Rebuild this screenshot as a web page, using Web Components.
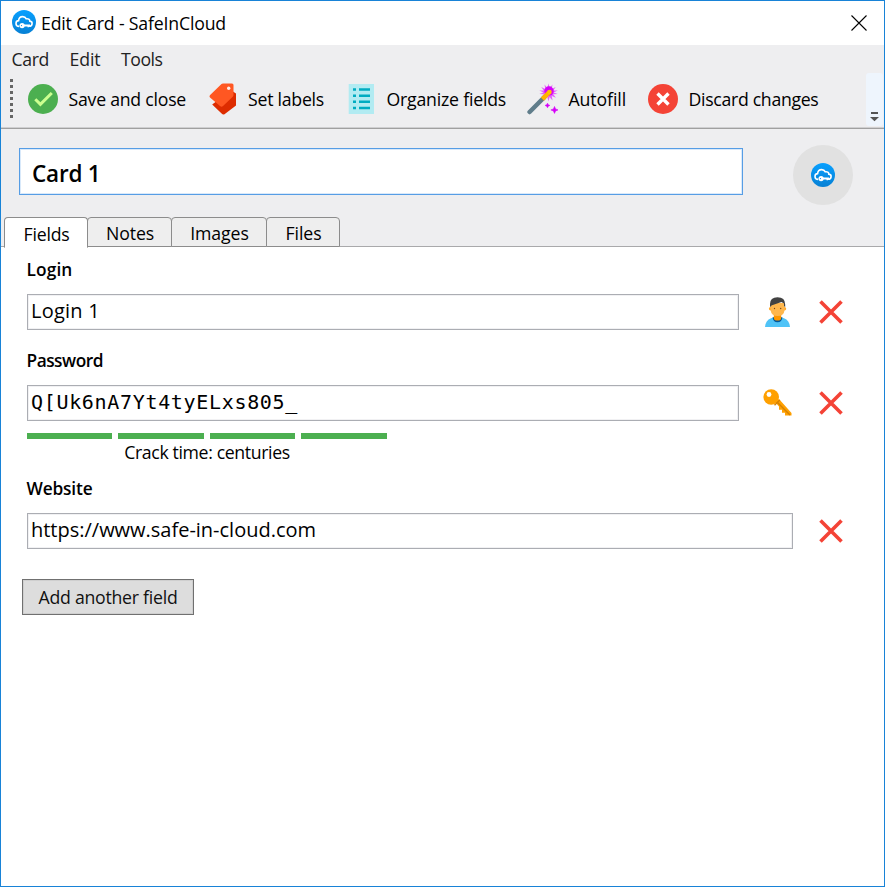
<!DOCTYPE html>
<html lang="en">
<head>
<meta charset="utf-8">
<title>Edit Card - SafeInCloud</title>
<style>
html, body { margin: 0; height: 100%; }
body { font: 17.700px/24px "Open Sans", "Noto Sans", sans-serif; color: #000; background: #fff; overflow: hidden; }
</style>
</head>
<body>
<card-window></card-window>
<script>
const define = (name, html, setup) => {
  const tpl = document.createElement('template');
  tpl.innerHTML = html;
  customElements.define(name, class extends HTMLElement {
    constructor() {
      super();
      this.attachShadow({ mode: 'open' }).append(tpl.content.cloneNode(true));
    }
    connectedCallback() { if (setup) setup(this, this.shadowRoot); }
  });
};

// One line of text, spaced to fill the width given in "w".
define('ui-text', `<style>:host{display:block;white-space:pre;flex:none}span{display:inline-block}</style><span><slot></slot></span>`, (el, root) => {
  const w = +el.getAttribute('w');
  if (!w) return;
  el.style.width = w + 'px';
  const natural = root.querySelector('span').getBoundingClientRect().width;
  el.style.letterSpacing = (w - natural) / el.textContent.length + 'px';
});

const ICONS = {
  app: [24, 24, `<defs><linearGradient id="g" x2="0" y2="1"><stop stop-color="#08a0ff"/><stop offset="1" stop-color="#0780d4"/></linearGradient></defs><circle cx="12" cy="12" r="12" fill="url(#g)"/><path d="M7.2 16.400C5.200 16.400 4 15.100 4 13.400c0-1.600 1.200-2.700 2.600-2.800C6.800 8.100 8.700 6.600 10.700 6.600c1.700 0 2.900.8 3.600 2.200 1.900-.4 3.500.7 3.500 2.300 1.400.2 2.400 1.200 2.300 2.500-.1 1.600-1.400 2.600-3 2.600" fill="none" stroke="#fff" stroke-width="1.600"/><circle cx="10.100" cy="15.600" r="2.600" fill="#fff"/><path d="M11.500 14.400h6.500v2.200h-1v.7h-1.500v-.7h-4z" fill="#fff"/><circle cx="9.500" cy="15.600" r=".6" fill="#0788df"/>`],
  check: [30, 30, `<circle cx="15" cy="15" r="15" fill="#4caf50"/><path d="M7.300 15.300l5.100 5.100L23.800 9" fill="none" stroke="#ccff90" stroke-width="3"/>`],
  tag: [28, 32, `<path d="M22 7.200L27 10.500V22.500L15.500 31.200Q14 32 12.600 30.600L3.200 21.500z" fill="#dd2c00"/><path d="M12.500 1Q13 .5 14 .5H23Q24.500 .5 24.500 2V12Q24.500 13 23.500 14L14 23Q12.500 24.300 11 22.900L1 14.600Q0 13.500 .9 12.300z" fill="#ff5722"/><circle cx="19.700" cy="5.200" r="1.700" fill="#ffebe6"/>`],
  list: [26, 30, `<path d="M.7 0H26v30H.7z" fill="#b2ebf2"/><path d="M5 4.300h3v2.500H5zm6 0h11v2.500H11zM5 10.400h3v2.500H5zm6 0h11v2.500H11zM5 16.500h3V19H5zm6 0h11V19H11zM5 22.700h3v2.500H5zm6 0h11v2.500H11z" fill="#00acc1"/>`],
  wand: [32, 32, `<path d="M21.500 .5l1.200 4.400 2.800-3.500-.8 4.500 4-2-2.500 3.700 4.500-.1-4.100 1.900 4.100 1.700-4.500.2 2.700 3.500-4.100-1.800.7 4.400-2.900-3.400-1.100 4.400-1.200-4.400-2.900 3.400.8-4.400-4.100 1.800 2.700-3.500-4.500-.2 4.100-1.700-4.100-1.900 4.500.1-2.600-3.700 4.100 2-.8-4.500 2.800 3.500z" fill="#e040fb" fill-opacity=".8"/><circle cx="22" cy="8" r="4.700" fill="#d500f9"/><path d="M2.600 29L16.500 15" stroke="#607d8b" stroke-width="4.500" stroke-linecap="round"/><path d="M15.400 16.200L22.500 9" stroke="#ffb300" stroke-width="4.500"/><circle cx="22.500" cy="9" r="2.250" fill="#ffc107"/><path d="M20.500 20.200l.7 1.500 1.600.7-1.600.8-.7 1.500-.8-1.500-1.600-.8 1.600-.7zM27.500 23.500l1 2.400 2.500 1-2.500 1.100-1 2.400-1-2.400-2.600-1.100 2.600-1z" fill="#d500f9" stroke="#d500f9" stroke-width=".6"/>`],
  discard: [30, 30, `<circle cx="15" cy="15" r="15" fill="#f44336"/><path d="M9.500 9.500l11 11m0-11l-11 11" stroke="#fff" stroke-width="3.400"/>`],
  close: [16, 16, `<path d="M.5.5l15 15m0-15l-15 15" stroke="#000" stroke-width="1.100"/>`],
  remove: [24, 24, `<path d="M1.500 1.500l21 21m0-21l-21 21" stroke="#f44336" stroke-width="3.600"/>`],
  more: [10, 10, `<path d="M1 0h7v2H1zM0 5h9l-4.500 4.200z" fill="#555"/>`],
  person: [26, 30, `<path d="M0 30Q.5 23.500 6 21.300Q9 20 12.500 20T19 21.300Q24.500 23.500 25 30z" fill="#4fc3f7"/><path d="M7.600 20.300Q8 25.300 12.500 25.300T17.400 20.300z" fill="#01579b"/><path d="M8.800 16h7.400v5Q16 23.600 12.500 23.600T8.800 21z" fill="#ff9800"/><circle cx="5.600" cy="11.800" r="1.700" fill="#ffa726"/><circle cx="19.500" cy="11.800" r="1.700" fill="#ffa726"/><path d="M5.600 6h14v7Q19 19 12.600 19T5.600 13z" fill="#ffb74d"/><path d="M5 10V7Q5 .3 12.500 .2Q20.200 .3 20.200 7.500V10L19 9V6.500L16.500 5L6.300 8.500V9z" fill="#424242"/><circle cx="9.500" cy="11.500" r=".65" fill="#784719"/><circle cx="15.700" cy="11.500" r=".65" fill="#784719"/>`],
  key: [30, 28, `<path d="M12 13L16 10L28.500 24V26.500H22V23.800H19V20.800H16V17.500z" fill="#ffa000"/><path d="M14 13L27 26" stroke="#d68100" stroke-width="1.400"/><circle cx="8.200" cy="8" r="7.800" fill="#ffa000"/><path d="M11.500 16.300L16.800 11" stroke="#d68100" stroke-width="1.400"/><circle cx="6" cy="5.500" r="2.400" fill="#fff"/>`]
};
define('ui-icon', `<style>:host{display:block;flex:none}svg{display:block}</style><div></div>`, (el, root) => {
  const [w, h, body] = ICONS[el.getAttribute('name')];
  root.querySelector('div').innerHTML = `<svg width="${w}" height="${h}" viewBox="0 0 ${w} ${h}">${body}</svg>`;
});

define('title-bar', `<style>:host{display:flex;height:44px;box-sizing:border-box;padding:0 17px 0 11px;background:#fff;align-items:center}
ui-icon{margin-top:-2px}ui-text{margin-left:5px}.x{margin:-1px 0 0 auto}</style>
<ui-icon name="app"></ui-icon><ui-text w="185">Edit Card - SafeInCloud</ui-text><ui-icon class="x" name="close"></ui-icon>`);

define('menu-bar', `<style>:host{display:flex;height:28px;align-items:center;padding-left:10.500px;gap:20.500px;color:#222;background:#eeeef0}</style>
<ui-text w="37.500">Card</ui-text><ui-text w="31">Edit</ui-text><ui-text w="41.500">Tools</ui-text>`);

define('tool-button', `<style>:host{display:flex;align-items:center;flex:none}</style><slot></slot>`);
define('tool-bar', `<style>:host{display:flex;height:55px;background:#eeeef0;align-items:center;border-bottom:1px solid #a0a0a0;box-shadow:inset 0 -1px #cfcfd1}
.grip{width:3px;height:39px;margin:-4px 15px 0 9px;background:repeating-linear-gradient(#666 0 3px,transparent 3px 6px)}
tool-button{margin-top:-3px}
.end{margin-left:auto;width:17px;height:53px;margin-bottom:2px;background:#eef5fd;border-radius:3px;display:flex;align-items:flex-end;justify-content:center;box-sizing:border-box;margin-right:1px}.end ui-icon{margin-bottom:4px}</style>
<div class="grip"></div>
<tool-button><ui-icon name="check"></ui-icon><ui-text w="117.500" style="margin-left:10.500px">Save and close</ui-text></tool-button>
<tool-button style="margin-left:23px"><ui-icon name="tag"></ui-icon><ui-text w="76" style="margin-left:11px">Set labels</ui-text></tool-button>
<tool-button style="margin-left:24px"><ui-icon name="list"></ui-icon><ui-text w="119.500" style="margin-left:12.500px">Organize fields</ui-text></tool-button>
<tool-button style="margin-left:21px"><ui-icon name="wand"></ui-icon><ui-text w="57.500" style="margin-left:9.500px">Autofill</ui-text></tool-button>
<tool-button style="margin-left:22px"><ui-icon name="discard"></ui-icon><ui-text w="130" style="margin-left:10.500px">Discard changes</ui-text></tool-button>
<div class="end"><ui-icon name="more"></ui-icon></div>`);

define('card-header', `<style>:host{display:flex;height:88px;background:#eeeef0;align-items:flex-start;padding:0 31px 0 18px;justify-content:space-between}
.box{margin-top:19px;width:724px;height:47px;box-sizing:border-box;border:1px solid #569de5;box-shadow:inset 0 0 0 1px #d9e9fa;background:#fff;display:flex;align-items:center;padding:5px 0 0 12px;font-size:22.500px;font-weight:600;line-height:32px}
.avatar{width:60px;height:60px;margin-top:16px;border-radius:50%;background:#e1e1e1;display:grid;place-items:center}</style>
<div class="box"><ui-text w="68.500">Card 1</ui-text></div><div class="avatar"><ui-icon name="app"></ui-icon></div>`);

define('tab-item', `<style>:host{display:flex;box-sizing:border-box;height:30px;align-items:center;justify-content:center;border:1px solid #8c8c8c;border-radius:4px 4px 0 0;background:#eee;padding:1px 0 0 1px;margin-left:-1px}
:host([active]){background:#fff;height:31px;margin:0;border-bottom-color:#fff;padding-top:3px;position:relative}</style><slot></slot>`);
define('tab-strip', `<style>:host{display:flex;height:30px;padding-left:3px;background:linear-gradient(#a9a9ab,#a9a9ab) bottom/100% 1px no-repeat,#eeeef0}</style>
<tab-item active style="width:84px"><ui-text w="46">Fields</ui-text></tab-item><tab-item style="width:85px"><ui-text w="48">Notes</ui-text></tab-item><tab-item style="width:96px"><ui-text w="58.500">Images</ui-text></tab-item><tab-item style="width:74px"><ui-text w="36">Files</ui-text></tab-item>`);

define('card-field', `<style>:host{display:block;padding-left:26px}
.label{font-weight:600;font-size:17.300px;margin-left:-.5px;height:24px}.row{display:flex;align-items:center;height:36px;margin-top:12px}
.box{box-sizing:border-box;height:36px;border:1px solid #abadb3;box-shadow:inset 0 0 0 1px #f1f1f3;background:#fff;padding:3px 0 0 3px;font-size:20px;line-height:26px}
.act{width:54px;display:flex;justify-content:center;margin-left:12px;margin-right:-12px}:host([wide]) .act{display:none}.gap{width:26.400px}</style>
<div class="label"><slot name="label"></slot></div><div class="row"><div class="box"><slot></slot></div><div class="act"><slot name="action"></slot></div><div class="gap"></div><ui-icon name="remove"></ui-icon></div>`, (el, root) => {
  root.querySelector('.box').style.width = el.hasAttribute('wide') ? '766px' : '712px';
});

define('strength-meter', `<style>:host{display:block;width:360px;margin:12px 0 0 26px}.bars{display:grid;grid-template-columns:85px 86px 85px 86px;gap:6px}.bars i{height:6px;background:#4caf50}.note{display:flex;justify-content:center;margin-top:1px}</style>
<div class="bars"><i></i><i></i><i></i><i></i></div><div class="note"><ui-text w="165.500">Crack time: centuries</ui-text></div>`);

define('push-button', `<style>:host{display:flex;box-sizing:border-box;width:172px;height:36px;border:1px solid #707070;box-shadow:inset 0 0 0 1px #cfcfcf;background:#ddd;color:#111;align-items:center;justify-content:center;padding-bottom:1px}</style><slot></slot>`);

define('card-window', `<style>:host{display:flex;flex-direction:column;box-sizing:border-box;width:885px;height:887px;border:1px solid #1883d7;background:#fff}
main{padding-top:11px}.mono{font-family:"DejaVu Sans Mono",monospace;font-size:20px}</style>
<title-bar></title-bar><menu-bar></menu-bar><tool-bar></tool-bar><card-header></card-header><tab-strip></tab-strip>
<main>
<card-field><ui-text slot="label" w="46">Login</ui-text><ui-text w="69">Login 1</ui-text><ui-icon slot="action" name="person"></ui-icon></card-field>
<card-field style="margin-top:19px"><ui-text slot="label" w="76.500">Password</ui-text><ui-text class="mono" w="267">Q[Uk6nA7Yt4tyELxs805_</ui-text><ui-icon slot="action" name="key"></ui-icon></card-field>
<strength-meter></strength-meter>
<card-field wide style="margin-top:13px"><ui-text slot="label" w="66">Website</ui-text><ui-text w="285">https://www.safe-in-cloud.com</ui-text></card-field>
<push-button style="margin:30px 0 0 21px"><ui-text w="139">Add another field</ui-text></push-button>
</main>`);
</script>
</body>
</html>
